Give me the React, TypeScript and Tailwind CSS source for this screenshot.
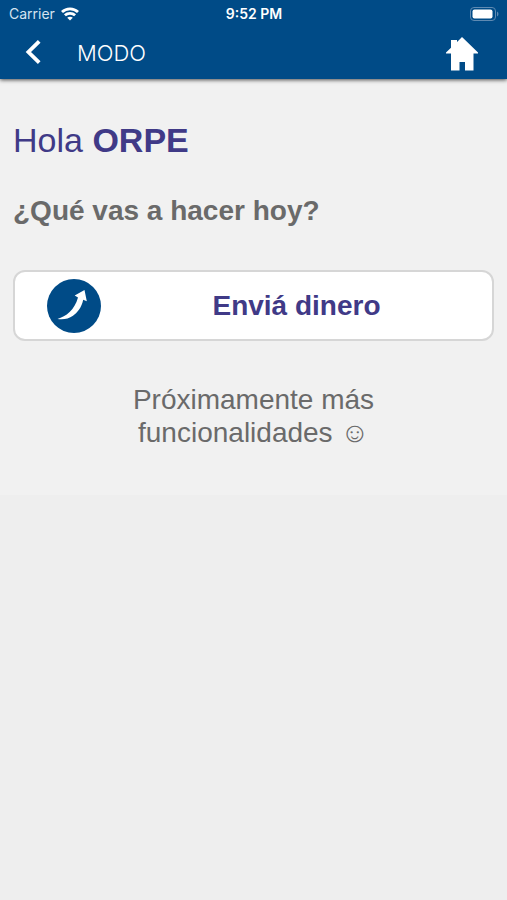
const StatusBar = () => {
  return (
    <div className="grid grid-cols-3 items-center h-7 pl-[9px] pr-2 text-white font-['Inter','Roboto',sans-serif]">
      <div className="flex items-center gap-1.5">
        <span className="text-sm text-[#d5e3f0]">Carrier</span>
        <svg viewBox="0 0 18 14" className="w-[18px] h-3.5" fill="none" stroke="currentColor" strokeWidth="2.8">
          <path d="M1 5C5.4 0.7 12.6 0.7 17 5" />
          <path d="M3.9 8.3C6.8 5.6 11.2 5.6 14.1 8.3" />
          <path d="M9 13.6 6.2 10.7C7.8 9.3 10.2 9.3 11.8 10.7Z" fill="currentColor" stroke="none" />
        </svg>
      </div>
      <span className="text-center text-sm font-semibold whitespace-nowrap">9:52 PM</span>
      <svg viewBox="0 0 30 14" className="justify-self-end w-[30px] h-3.5">
        <rect x="1.5" y="0.5" width="25" height="13" rx="3.5" fill="none" stroke="#5f8ab2" />
        <rect x="3.5" y="2.5" width="20" height="9" rx="2" fill="#fff" />
        <path d="M28 4.5v5c2-1 2-4 0-5Z" fill="#5f8ab2" />
      </svg>
    </div>
  )
}

const Header = () => {
  return (
    <header className="relative z-10 bg-[#004b87] shadow-[0_1px_4px_rgba(0,0,0,0.7)]">
      <StatusBar />
      <div className="flex items-center h-[51px] pl-[25px] pr-[29px] text-white">
        <button type="button" aria-label="Volver" className="mr-9 mb-1">
          <svg viewBox="0 0 16 24" className="w-4 h-6" fill="none" stroke="currentColor" strokeWidth="3.8">
            <path d="M14.2 1.4 3.4 12l10.8 10.6" />
          </svg>
        </button>
        <h1 className="flex-1 mb-0.5 text-[22px] leading-7 font-light font-['Inter','Roboto',sans-serif]">MODO</h1>
        <a href="#" aria-label="Inicio">
          <svg viewBox="0 0 32 34" className="w-8 h-[34px]" fill="currentColor">
            <path d="M16 0 32 15.5V16.5H27.5V33.5H19V25H13.5V33.5H5V16.5H0V15.5L5 10.8V3H11V5Z" />
          </svg>
        </a>
      </div>
    </header>
  )
}

export default function App() {
  return (
    <div className="min-h-screen bg-[#eee] font-['Liberation_Sans',Arial,sans-serif]">
      <Header />
      <main className="bg-[#f1f1f1] px-[13px] pt-[41px] pb-[46px] text-[28px] leading-[33px] text-[#6a6a6a]">
        <h2 className="text-[34px] leading-10 text-[#403a87]">
          Hola <strong>ORPE</strong>
        </h2>
        <p className="mt-[34px] font-bold">¿Qué vas a hacer hoy?</p>
        <button
          type="button"
          className="mt-[43px] flex items-center w-full h-[71px] pl-8 bg-white border-2 border-[#d6d6d6] rounded-xl text-[#403a87]"
        >
          <svg viewBox="0 0 54 54" className="w-[54px] h-[54px]">
            <circle cx="27" cy="27" r="27" fill="#004b87" />
            <path
              d="M10.5 40C19 37.5 27.5 31 31 18.5L27.7 16.5 37.5 11 39.8 22.2 36.2 20.8C34.5 29 30 34 26 36.8C21.5 40 16 41 10.5 40Z"
              fill="#fff"
            />
          </svg>
          <span className="flex-1 text-center font-bold">Enviá dinero</span>
        </button>
        <p className="mt-[42px] text-center">
          Próximamente más
          <br />
          funcionalidades ☺
        </p>
      </main>
    </div>
  )
}
